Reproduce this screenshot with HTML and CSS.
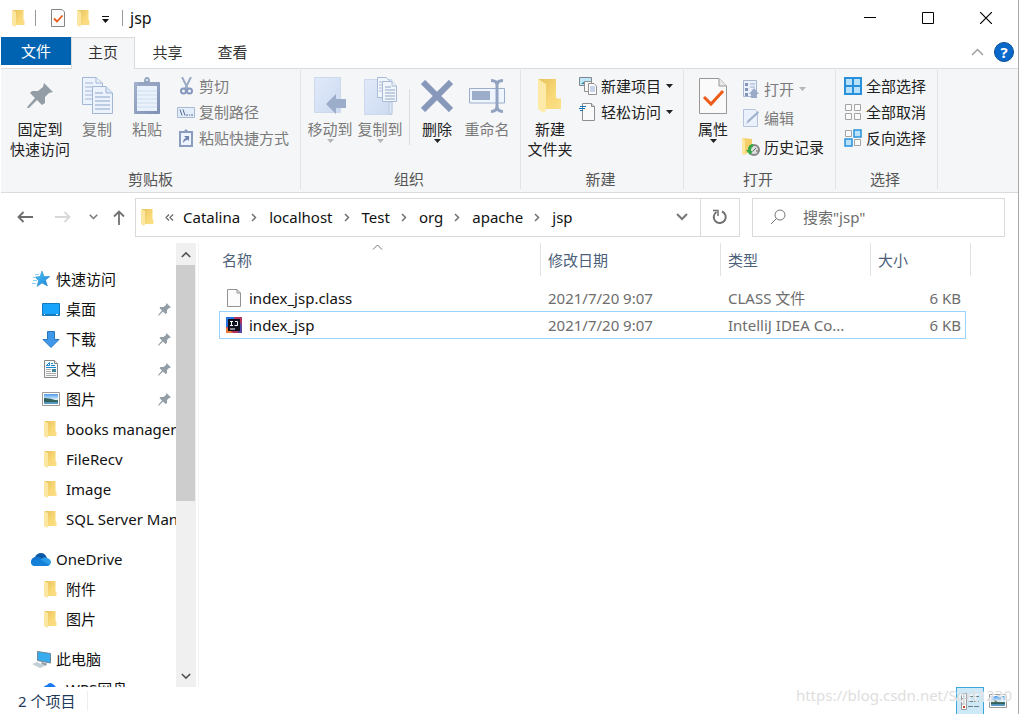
FILE: index.html
```html
<!DOCTYPE html>
<html lang="zh-CN">
<head>
<meta charset="utf-8">
<title>jsp</title>
<link rel="stylesheet" href="styles.css">
</head>
<body>
<svg class="sprite" aria-hidden="true">
  <defs>
    <linearGradient id="gold" x1="0" y1="0" x2="1" y2="1"><stop offset="0" stop-color="#e8c25c"/><stop offset=".6" stop-color="#f9d978"/><stop offset="1" stop-color="#fbe08a"/></linearGradient>
    <linearGradient id="board" x1="0" y1="0" x2="1" y2="1"><stop offset="0" stop-color="#a3b2cd"/><stop offset="1" stop-color="#7e90b3"/></linearGradient>
    <linearGradient id="pale" x1="0" y1="0" x2="1" y2="1"><stop offset="0" stop-color="#e1eafa"/><stop offset="1" stop-color="#cbdaf0"/></linearGradient>
    <linearGradient id="sky" x1="0" y1="0" x2="0" y2="1"><stop offset="0" stop-color="#4f9be8"/><stop offset=".55" stop-color="#d9f0fb"/><stop offset=".6" stop-color="#3f7d77"/><stop offset="1" stop-color="#5f9fd8"/></linearGradient>
    <linearGradient id="star" x1="0" y1="0" x2="1" y2="1"><stop offset="0" stop-color="#54c3f7"/><stop offset="1" stop-color="#1383d8"/></linearGradient>
  </defs>
  <symbol id="folder" viewBox="0 0 24 34"><path d="M1 0H18V19L23 20V30H5Z" fill="url(#gold)"/><path d="M0 0L8 5V31L6 34L0 30Z" fill="#fdeaa9"/></symbol>
  <symbol id="folder-small" viewBox="0 0 13 17"><path d="M1 0H11.500V10L12.500 11V15H3Z" fill="url(#gold)"/><path d="M0 0L4 2V15.500L3 17L0 15Z" fill="#fbe6a2"/></symbol>
  <symbol id="pin" viewBox="0 0 26 26"><path d="M17 0L26 9L22 10L18 14L18 20L15 22L10 17L2 25L0 25L1 23L8 15L3 10L5 8L11 8L16 4Z" fill="#929da5"/></symbol>
  <symbol id="check" viewBox="0 0 28 36"><path d="M.5 .5H20L27.500 8V35.500H.5Z" fill="#fafafa" stroke="#989898"/><path d="M20 .5V8H27.500" fill="#e7e7e7" stroke="#989898"/><path d="M5 19L12 26L24 13" fill="none" stroke="#ee5a18" stroke-width="3"/></symbol>
  <symbol id="check-small" viewBox="0 0 14 18"><path d="M.5 .5H11L13.500 3V17.500H.5Z" fill="#fafafa" stroke="#858585"/><path d="M3 9.500L6 12.500L11.500 6.500" fill="none" stroke="#ee5a18" stroke-width="1.800"/></symbol>
  <symbol id="caret" viewBox="0 0 7 4"><path d="M0 0H7L3.500 4Z" fill="currentColor"/></symbol>
  <symbol id="next" viewBox="0 0 6 9"><path d="M1 1L4.500 4.500L1 8" fill="none" stroke="#727272" stroke-width="1.500"/></symbol>
  <symbol id="down" viewBox="0 0 12 8"><path d="M1 1L6 6L11 1" fill="none" stroke="currentColor" stroke-width="2"/></symbol>
  <symbol id="picture" viewBox="0 0 18 14"><path d="M.5 .5H17.500V13.500H.5Z" fill="#fff" stroke="#999"/><path d="M2 2H16V12H2Z" fill="url(#sky)"/><path d="M2 6Q8 6 16 9V10H2Z" fill="#33615c"/></symbol>
  <symbol id="cloud" viewBox="0 0 20 13"><path d="M4 4Q6 0 10 0Q14 0 16 5L10 8Z" fill="#0c59a8"/><path d="M5 12L0 9Q0 5 4 4Q7 3 10 5L17 9Z" fill="#1273d0"/><path d="M9 7Q13 3 16 5Q20 6 20 9.500Q19 13 16 13H4Q1 13 0 10Z" fill="#2a9ce8"/><path d="M0 8L9 6L18 12Q17 13 16 13H4Q1 13 0 10Z" fill="#1581d8"/></symbol>
</svg>

<div class="window">
  <header class="titlebar">
    <svg class="folder-sm"><use href="#folder-small"/></svg>
    <span class="rule rule-a"></span>
    <button class="plain" aria-label="属性"><svg class="check-sm"><use href="#check-small"/></svg></button>
    <button class="plain quick-folder" aria-label="新建文件夹"><svg class="folder-sm"><use href="#folder-small"/></svg></button>
    <button class="plain quick-menu" aria-label="自定义快速访问工具栏"><svg width="7" height="7" viewBox="0 0 7 7"><path d="M0 0H7V1H0ZM0 3H7L3.500 7Z" fill="#111"/></svg></button>
    <span class="rule"></span>
    <h1 class="title">jsp</h1>
    <div class="controls">
      <button class="plain control" aria-label="最小化"><svg width="12" height="12"><path d="M0 5.500H12" stroke="#000"/></svg></button>
      <button class="plain control" aria-label="最大化"><svg width="12" height="12"><path d="M.5 .5H11.500V11.500H.5Z" fill="none" stroke="#000"/></svg></button>
      <button class="plain control" aria-label="关闭"><svg width="12" height="12"><path d="M0 0L12 12M12 0L0 12" stroke="#000" stroke-width="1.200"/></svg></button>
    </div>
  </header>

  <nav class="tabs">
    <button class="tab file">文件</button>
    <button class="tab active">主页</button>
    <button class="tab">共享</button>
    <button class="tab">查看</button>
    <div class="tab-tools">
      <button class="plain" aria-label="最小化功能区"><svg width="13" height="8"><path d="M1 7L6.500 1.500L12 7" fill="none" stroke="#a0a0a0" stroke-width="1.500"/></svg></button>
      <button class="help" aria-label="帮助">?</button>
    </div>
  </nav>

  <section class="ribbon">
    <div class="group clipboard">
      <div class="tools">
        <button class="big pin-btn"><span class="art"><svg width="26" height="26"><use href="#pin"/></svg></span>固定到<br>快速访问</button>
        <button class="big off"><span class="art"><svg width="31" height="37" viewBox="0 0 31 37"><g fill="#edf3fc" stroke="#a3b6d5"><path d="M.5 .5H14L20.500 6V27.500H.5Z"/><path d="M14 .5V6H20"/><path d="M3 6H11M3 10H17M3 14H17M3 18H17M3 22H17"/><path d="M10.500 9.500H24L30.500 16V36.500H10.500Z"/><path d="M24 9.500V16H30" fill="#d8e5f8"/><path d="M13 16H21M13 20H28M13 24H28M13 28H28M13 32H28" stroke="#8da5ca"/></g></svg></span>复制</button>
        <button class="big off"><span class="art"><svg width="26" height="37" viewBox="0 0 26 37"><rect y="5" width="26" height="32" rx="1" fill="url(#board)"/><path d="M3 9H23V34H3Z" fill="#e9f1fd"/><path d="M3 14H23M3 18H23M3 22H23M3 26H23M3 30H23" stroke="#d0deef"/><path d="M5 8V5H10Q10 0 13 0Q16 0 16 5H21V8Z" fill="#96a5bf"/><circle cx="13" cy="3" r="1" fill="#edf4ff"/></svg></span>粘贴</button>
        <div class="stack">
          <button class="small off"><span class="icon"><svg width="13" height="18" viewBox="0 0 13 18"><path d="M2 0L8 12M11 0L5 12" stroke="#9aabc5" stroke-width="2"/><circle cx="3.500" cy="14" r="2.500" fill="none" stroke="#8598bd" stroke-width="2"/><circle cx="9.500" cy="14" r="2.500" fill="none" stroke="#8598bd" stroke-width="2"/></svg></span>剪切</button>
          <button class="small off"><span class="icon"><svg width="18" height="11"><path d="M.5 .5H17.500V10.500H.5Z" fill="#e4edfa" stroke="#a9b9d2"/><path d="M3 2.500L5 8.500M6 2.500L8 8.500" stroke="#536b92"/><path d="M9 8H11M12 8H13M14 8H16" stroke="#536b92"/></svg></span>复制路径</button>
          <button class="small off"><span class="icon"><svg width="14" height="18" viewBox="0 0 14 18"><path d="M0 2H14V18H0Z" fill="#8b9dbe"/><path d="M2 4H12V16H2Z" fill="#edf4ff"/><path d="M3 4V2H5L7 0L9 2H11V4Z" fill="#8b9dbe"/><path d="M4 14Q4 10 7 9L5 7H10V12L8.500 10.500Q6 11 4 14Z" fill="#6e83ab"/></svg></span>粘贴快捷方式</button>
        </div>
      </div>
      <h2 class="group-name">剪贴板</h2>
    </div>

    <div class="group organize">
      <div class="tools">
        <button class="big off"><span class="art"><svg width="32" height="37" viewBox="0 0 32 37"><path d="M.5 .5H26.500V35.500H.5Z" fill="url(#pale)" stroke="#ccd9ea"/><path d="M12 27L22 17V22H32V31H22V37Z" fill="#9cadc9"/></svg></span>移动到<svg class="caret"><use href="#caret"/></svg></button>
        <button class="big off"><span class="art"><svg width="33" height="38" viewBox="0 0 33 38"><path d="M.5 2.500H28V37.500H.5Z" fill="url(#pale)" stroke="#ccd9ea"/><path d="M25 25H28V37H25Z" fill="#dce7f5" stroke="#b9c9df"/><g fill="#f1f6fd" stroke="#a8bad4"><path d="M13.500 .5H22L27 5V20.500H13.500Z"/><path d="M15 5H21M15 8H25M15 11H25M15 14H25"/><path d="M18.500 4.500H28L32.500 9V24.500H18.500Z"/><path d="M28 4.500V9H32"/><path d="M21 10H27M21 13H31M21 16H31M21 19H31M21 22H31" stroke="#91a6c7"/></g></svg></span>复制到<svg class="caret"><use href="#caret"/></svg></button>
        <span class="divider"></span>
        <button class="big"><span class="art"><svg width="32" height="32" viewBox="0 0 32 32"><path d="M2 2L30 30M30 2L2 30" stroke="#8798ba" stroke-width="6"/></svg></span>删除<svg class="caret"><use href="#caret"/></svg></button>
        <button class="big off"><span class="art"><svg width="36" height="34" viewBox="0 0 36 34"><path d="M.5 9.500H35.500V24H.5Z" fill="#eef5ff" stroke="#9caec9"/><path d="M3 12H21V21H3Z" fill="#9cadca"/><path d="M22 1.500Q28 1.500 28 6Q28 1.500 34 1.500M28 5V28M22 32.500Q28 32.500 28 27Q28 32.500 34 32.500" fill="none" stroke="#91a3c1" stroke-width="3"/></svg></span>重命名</button>
      </div>
      <h2 class="group-name">组织</h2>
    </div>

    <div class="group create">
      <div class="tools">
        <button class="big"><span class="art"><svg width="24" height="34"><use href="#folder"/></svg></span>新建<br>文件夹</button>
        <div class="stack">
          <button class="small"><span class="icon"><svg width="18" height="18" viewBox="0 0 18 18"><path d="M.5 .5H12.500V8.500H.5Z" fill="#bfe7fa" stroke="#80868b"/><path d="M2 7L6 4L10 7Z" fill="#338595"/><path d="M5.500 4.500H12.500V14.500H5.500Z" fill="#f8f8f8" stroke="#929292"/><path d="M9.500 6.500H15L17.500 9V17.500H9.500Z" fill="#fff" stroke="#929292"/><path d="M11 10H16M11 12H16M11 14H16" stroke="#91a8dc"/></svg></span>新建项目<svg class="caret"><use href="#caret"/></svg></button>
          <button class="small"><span class="icon"><svg width="18" height="18" viewBox="0 0 18 18"><path d="M3.500 .5H12.500L15.500 3.500V17.500H3.500Z" fill="#fafafa" stroke="#8e8e8e"/><path d="M12.500 .5V3.500H15.500" fill="#ddd" stroke="#8e8e8e"/><path d="M1 3.500H7M0 5.500H6M1 7.500H4" stroke="#1674bc"/></svg></span>轻松访问<svg class="caret"><use href="#caret"/></svg></button>
        </div>
      </div>
      <h2 class="group-name">新建</h2>
    </div>

    <div class="group open">
      <div class="tools">
        <button class="big"><span class="art"><svg width="28" height="36"><use href="#check"/></svg></span>属性<svg class="caret"><use href="#caret"/></svg></button>
        <div class="stack loose">
          <button class="small off"><span class="icon"><svg width="16" height="18" viewBox="0 0 16 18"><path d="M.5 .5H13.500V16.500H.5Z" fill="#eaf1fc" stroke="#a7b6cd"/><path d="M2 3H5V6H2ZM2 8H5V11H2ZM2 13H5V16H2Z" fill="#8295b8"/><path d="M7 4H12M7 7H12" stroke="#9caec8"/><path d="M8 18V14H6L11 8L16 14H14V18Z" fill="#9aabc8"/></svg></span>打开<svg class="caret"><use href="#caret"/></svg></button>
          <button class="small off"><span class="icon"><svg width="16" height="18" viewBox="0 0 16 18"><path d="M.5 .5H12L14.500 3V17.500H.5Z" fill="#eaf1fc" stroke="#b5c4da"/><path d="M3 15L5 11L15 2L16 4L6 13Z" fill="#a0b0ca"/></svg></span>编辑</button>
          <button class="small"><span class="icon"><svg width="18" height="18" viewBox="0 0 18 18"><path d="M0 0L10 1V12L2 17L0 15Z" fill="#f4cf69"/><path d="M0 0L3 2V17L0 15Z" fill="#fde89d"/><circle cx="12" cy="12" r="5" fill="#ddd" stroke="#888" stroke-width="2"/><path d="M11 13L14 10M14 13H16" fill="none" stroke="#666"/><path d="M11 6Q6 6 6 12H4L8 17L11 13H9Q9 9 11 9Z" fill="#35a846"/></svg></span>历史记录</button>
        </div>
      </div>
      <h2 class="group-name">打开</h2>
    </div>

    <div class="group choose">
      <div class="tools">
        <div class="stack">
          <button class="small"><span class="icon"><svg width="18" height="18" viewBox="0 0 18 18"><path d="M1 1H17V17H1ZM9 1V17M1 9H17" fill="#b8e1fb" stroke="#2991dc" stroke-width="2"/></svg></span>全部选择</button>
          <button class="small"><span class="icon"><svg width="16" height="16" viewBox="0 0 16 16"><path d="M.5 .5H6.500V6.500H.5ZM9.500 .5H15.500V6.500H9.500ZM.5 9.500H6.500V15.500H.5ZM9.500 9.500H15.500V15.500H9.500Z" fill="#fafafa" stroke="#a4a4a4"/></svg></span>全部取消</button>
          <button class="small"><span class="icon"><svg width="18" height="18" viewBox="0 0 18 18"><path d="M1.500 1.500H7.500V7.500H1.500ZM10.500 10.500H16.500V16.500H10.500Z" fill="#fafafa" stroke="#a4a4a4"/><path d="M10 1H17V8H10ZM1 10H8V17H1Z" fill="#b8e1fb" stroke="#2991dc" stroke-width="1.500"/></svg></span>反向选择</button>
        </div>
      </div>
      <h2 class="group-name">选择</h2>
    </div>
  </section>

  <div class="location">
    <div class="history">
      <button class="plain" aria-label="返回"><svg width="16" height="12"><path d="M1 6H16M6.500 1L1.500 6L6.500 11" fill="none" stroke="#6d6d6d" stroke-width="1.800"/></svg></button>
      <button class="plain forward" aria-label="前进"><svg width="16" height="12"><path d="M0 6H15M9.500 1L14.500 6L9.500 11" fill="none" stroke="#d8d8d8" stroke-width="1.800"/></svg></button>
      <button class="plain recent" aria-label="最近浏览的位置"><svg width="9" height="6"><use href="#down"/></svg></button>
      <button class="plain up" aria-label="上移"><svg width="12" height="15"><path d="M6 15V1.500M1 6.500L6 1.500L11 6.500" fill="none" stroke="#727272" stroke-width="1.800"/></svg></button>
    </div>
    <div class="address">
      <svg class="folder-sm"><use href="#folder-small"/></svg>
      <svg class="earlier" width="9" height="7"><path d="M4 .5L1 3.500L4 6.500M8 .5L5 3.500L8 6.500" fill="none" stroke="#666" stroke-width="1.200"/></svg>
      <div class="crumbs">
        <a href="#catalina">Catalina</a><svg class="next"><use href="#next"/></svg>
        <a href="#localhost">localhost</a><svg class="next"><use href="#next"/></svg>
        <a href="#test">Test</a><svg class="next"><use href="#next"/></svg>
        <a href="#org">org</a><svg class="next"><use href="#next"/></svg>
        <a href="#apache">apache</a><svg class="next"><use href="#next"/></svg>
        <a href="#jsp">jsp</a>
      </div>
      <button class="plain expand" aria-label="以前的位置"><svg width="12" height="8"><use href="#down"/></svg></button>
      <button class="plain refresh" aria-label="刷新"><svg width="16" height="16" viewBox="0 0 16 16"><path d="M4.500 3A6 6 0 1 0 10 2.500" fill="none" stroke="#707070" stroke-width="2"/><path d="M1 1.500H6V7" fill="none" stroke="#707070" stroke-width="1.500"/></svg></button>
    </div>
    <label class="search">
      <svg width="16" height="16"><circle cx="10" cy="6" r="5" fill="none" stroke="#777"/><path d="M6.500 9.500L1 15" stroke="#777"/></svg>
      <input type="search" aria-label="搜索" placeholder='搜索"jsp"'>
    </label>
  </div>

  <main class="body">
    <aside class="sidebar">
      <nav class="tree">
        <div class="branch">
          <a class="node root" href="#quick"><svg width="18" height="16" viewBox="0 0 18 16"><path d="M10 0L12 5.500L18 5.500L13.500 9L15.500 15L10 12L5 15.500L6.500 9.500L3 6L8 5.500Z" fill="url(#star)" stroke="#2484c6" stroke-width=".5"/><path d="M3 3.500H7M1 6.500H4M1 9.500H5M0 12.500H4" stroke="#8fd0f2"/></svg>快速访问</a>
          <a class="node" href="#desktop"><svg width="18" height="13" viewBox="0 0 18 13"><path d="M.5 .5H17.500V12.500H.5Z" fill="#18a3fc" stroke="#137bbd"/><path d="M1 11.500H17" stroke="#1679b8"/><path d="M2 11.500H3M14 11.500H16" stroke="#fff"/></svg>桌面<svg class="pin"><use href="#pin"/></svg></a>
          <a class="node" href="#downloads"><svg width="18" height="17" viewBox="0 0 18 17"><path d="M5.500 .5H12.500V8.500H17L9 16.500L1 8.500H5.500Z" fill="#3f98ea" stroke="#2875bb"/></svg>下载<svg class="pin"><use href="#pin"/></svg></a>
          <a class="node" href="#documents"><svg width="18" height="18" viewBox="0 0 18 18"><path d="M2.500 .5H12.500L15.500 3.500V17.500H2.500Z" fill="#fafafa" stroke="#888"/><path d="M12.500 .5V3.500H15.500" fill="#eee" stroke="#888"/><path d="M4 5.500H7.500V2.500L5 5M9 3.500H11M9 5.500H13M4 7.500H14" fill="none" stroke="#1b88cd"/><path d="M4 9.500H9M4 11.500H9M4 13.500H14M4 15.500H14" stroke="#aaa"/><path d="M10 9H14V12H10Z" fill="#41859a"/></svg>文档<svg class="pin"><use href="#pin"/></svg></a>
          <a class="node" href="#pictures"><svg width="18" height="14"><use href="#picture"/></svg>图片<svg class="pin"><use href="#pin"/></svg></a>
          <a class="node" href="#books"><svg class="folder-tree"><use href="#folder-small"/></svg>books manager</a>
          <a class="node" href="#filerecv"><svg class="folder-tree"><use href="#folder-small"/></svg>FileRecv</a>
          <a class="node" href="#image"><svg class="folder-tree"><use href="#folder-small"/></svg>Image</a>
          <a class="node" href="#sql"><svg class="folder-tree"><use href="#folder-small"/></svg>SQL Server Man</a>
        </div>
        <div class="branch">
          <a class="node root cloud" href="#onedrive"><svg width="20" height="13"><use href="#cloud"/></svg>OneDrive</a>
          <a class="node" href="#attachments"><svg class="folder-tree"><use href="#folder-small"/></svg>附件</a>
          <a class="node" href="#cloud-pictures"><svg class="folder-tree"><use href="#folder-small"/></svg>图片</a>
        </div>
        <div class="branch">
          <a class="node root cloud" href="#computer"><svg width="20" height="17" viewBox="0 0 20 17"><path d="M6.500 .5L19.500 2.500V12L6.500 9.500Z" fill="#38acef" stroke="#6d8899"/><path d="M11 11L16 12.500L15 15L10 13Z" fill="#95a2ab"/><path d="M1 13L6 11L14 15L9 17Z" fill="#c4ced5"/></svg>此电脑</a>
          <a class="node" href="#wps"><svg width="18" height="16" viewBox="0 0 18 16"><path d="M3 15Q0 14 1 9Q1 5 5 4Q8 0 12 4Q14 5 14 8Q18 9 17 13Q16 15 14 15Z" fill="#1a78f0"/></svg>WPS网盘</a>
        </div>
      </nav>
      <div class="scrollbar">
        <button class="plain scroll-arrow" aria-label="向上滚动"><svg class="flip" width="10" height="7"><use href="#down"/></svg></button>
        <div class="track"><div class="thumb"></div></div>
        <button class="plain scroll-arrow" aria-label="向下滚动"><svg width="10" height="7"><use href="#down"/></svg></button>
      </div>
    </aside>

    <section class="files">
      <table class="list">
        <colgroup><col><col class="col-date"><col class="col-type"><col class="col-size"></colgroup>
        <thead>
          <tr><th class="name-head">名称<svg class="sort" width="11" height="6"><path d="M1 5.500L5.500 1L10 5.500" fill="none" stroke="#777"/></svg></th><th>修改日期</th><th>类型</th><th class="last">大小</th></tr>
        </thead>
        <tbody>
          <tr><td><span class="file-name"><svg width="16" height="18" viewBox="0 0 16 18"><path d="M1.500 .5H11L14.500 4V17.500H1.500Z" fill="#fcfcfc" stroke="#929292"/><path d="M11 .5V4H14.500" fill="none" stroke="#929292"/></svg>index_jsp.class</span></td><td>2021/7/20 9:07</td><td>CLASS 文件</td><td class="size">6 KB</td></tr>
          <tr class="selected"><td><span class="file-name"><svg width="16" height="16" viewBox="0 0 16 16"><path d="M0 0H16V16H0Z" fill="#b33360"/><path d="M0 0H8V3H3V10H0Z" fill="#2675df"/><path d="M0 10V16H7Z" fill="#ed7b37"/><path d="M13 4L16 8V16H12Z" fill="#5446a3"/><path d="M2 2H14V14H2Z" fill="#111020"/><path d="M4 4.500H7M5.500 4V8M4 8.500H7M9 4.500H11.500V8.500H8.500M4 12H9" fill="none" stroke="#fff"/></svg>index_jsp</span></td><td>2021/7/20 9:07</td><td>IntelliJ IDEA Co...</td><td class="size">6 KB</td></tr>
        </tbody>
      </table>
    </section>
  </main>

  <footer class="status">
    <span class="count">2 个项目</span>
    <div class="views">
      <button class="plain view on" aria-label="详细信息"><svg width="18" height="17" viewBox="0 0 18 17"><path d="M.5 .5H5.500V16.500H.5ZM.5 5.500H5.500M.5 11H5.500" fill="#fff" stroke="#999"/><path d="M2 3H4" stroke="#277dcc" stroke-width="2"/><path d="M2 8.500H4" stroke="#6f8752" stroke-width="2"/><path d="M2 14H4" stroke="#c6412c" stroke-width="2"/><path d="M7 3.500H12M13 3.500H18M7 8.500H12M13 8.500H18M7 13.500H12M13 13.500H18" stroke="#6e7b81"/></svg></button>
      <button class="plain view" aria-label="大缩略图"><svg width="18" height="14"><use href="#picture"/></svg></button>
    </div>
    <span class="watermark">https://blog.csdn.net/Sqrt1230</span>
  </footer>
</div>
</body>
</html>
```

FILE: styles.css
```css
* { box-sizing: border-box; }
body {
  margin: 0;
  background: #fff;
  color: #111;
  font: 15px/20px "Noto Sans", "Noto Sans CJK SC", sans-serif;
}
button, input { font: inherit; color: inherit; }
a { color: inherit; text-decoration: none; }
svg { display: block; flex: none; }
.sprite { position: absolute; width: 0; height: 0; }
.plain {
  display: flex;
  align-items: center;
  justify-content: center;
  padding: 0;
  border: 0;
  background: none;
}
.window {
  display: flex;
  flex-direction: column;
  height: 100vh;
  padding-left: 1px;
  border-right: 1px solid #aaa;
  overflow: hidden;
}

/* Title bar */
.titlebar {
  display: flex;
  align-items: center;
  height: 37px;
  flex: none;
  padding: 0 3px 1px 11px;
}
.folder-sm { width: 13px; height: 17px; }
.check-sm { width: 14px; height: 18px; }
.rule { width: 1px; height: 16px; background: #999; }
.rule-a { margin: 0 15px 0 10px; }
.quick-folder { margin: 0 12px; }
.quick-menu { margin-right: 13px; padding-top: 3px; }
.title { margin: 0 0 0 7px; font-size: 16px; font-weight: 400; }
.controls { display: flex; margin-left: auto; }
.control { width: 58px; height: 36px; }

/* Tabs */
.tabs {
  display: flex;
  height: 32px;
  flex: none;
  border-bottom: 1px solid #dadbdc;
}
.tab {
  width: 65px;
  height: 31px;
  padding: 0 0 2px;
  border: 0;
  background: none;
  color: #333;
}
.tab.file { width: 70px; height: 28px; padding: 0; background: #0063b1; color: #fff; }
.tab.active {
  width: 64px;
  height: 32px;
  padding-bottom: 4px;
  border: 1px solid #dadbdc;
  border-bottom: 0;
  background: #f5f6f7;
}
.tab-tools { display: flex; align-items: center; gap: 10px; margin-left: auto; padding: 0 4px 2px 0; }
.help {
  width: 20px;
  height: 20px;
  padding: 0;
  border: 1px solid #0b4f96;
  border-radius: 50%;
  background: #0869cb;
  color: #fff;
  font-weight: 700;
  line-height: 18px;
}

/* Ribbon */
.ribbon {
  display: flex;
  height: 124px;
  flex: none;
  padding: 1px 0 3px;
  border-bottom: 1px solid #dadbdc;
  background: #f5f6f7;
}
.group {
  display: flex;
  flex-direction: column;
  border-right: 1px solid #e2e3e4;
}
.clipboard { width: 300px; }
.clipboard .tools { padding-left: 7px; }
.organize { width: 220px; }
.organize .tools { padding-left: 4px; }
.create { width: 163px; }
.create .tools { padding-left: 4px; }
.open { width: 152px; }
.open .tools { padding-left: 4px; }
.choose { width: 102px; }
.choose .tools { padding-left: 8px; }
.tools { display: flex; align-items: flex-start; flex: 1; padding-top: 3px; }
.group-name {
  margin: 0;
  padding-right: 3px;
  color: #555;
  font-size: 15px;
  font-weight: 400;
  text-align: center;
}
.clipboard .group-name { padding-right: 0; }
.big {
  display: flex;
  flex-direction: column;
  align-items: center;
  width: 50px;
  padding: 0;
  border: 0;
  background: none;
  color: #222;
  white-space: nowrap;
}
.pin-btn { width: 64px; }
.big:has(br) { display: block; }
.art { display: flex; align-items: center; justify-content: center; height: 45px; margin-bottom: 1px; }
.off { color: #7b7b7b; }
.caret { width: 7px; height: 4px; }
.off .caret { color: #b5b5b5; }
.divider { width: 1px; height: 56px; margin: 16px 2px 0 4px; background: #dddedf; }
.stack { display: flex; flex-direction: column; padding-left: 4px; }
.small {
  display: flex;
  align-items: center;
  height: 26px;
  padding: 0;
  border: 0;
  background: none;
  color: #222;
  white-space: nowrap;
}
.small.off { color: #7b7b7b; }
.loose { padding-top: 1px; }
.loose .small { height: 29px; }
.icon { display: flex; justify-content: center; width: 18px; margin-right: 4px; }
.clipboard .stack { padding-left: 5px; }
.small .caret { margin-left: 5px; }
.choose .stack { padding-left: 0; }

/* Location bar */
.location {
  display: flex;
  align-items: center;
  height: 50px;
  flex: none;
  padding: 0 13px 2px 0;
}
.history { display: flex; align-items: center; width: 134px; padding-left: 16px; color: #777; }
.forward { margin-left: 22px; }
.recent { margin-left: 18px; }
.up { margin-left: 15px; }
.address {
  display: flex;
  align-items: center;
  flex: 1;
  height: 39px;
  padding-left: 5px;
  border: 1px solid #d9d9d9;
}
.earlier { margin: 0 9px 0 11px; }
.crumbs { display: flex; align-items: center; gap: 12px; flex: 1; }
.next { width: 6px; height: 9px; }
.crumbs a { margin-right: -1px; }
.expand { width: 36px; height: 37px; color: #777; }
.refresh { width: 39px; height: 37px; border-left: 1px solid #d9d9d9; }
.search {
  display: flex;
  align-items: center;
  gap: 17px;
  width: 253px;
  height: 39px;
  margin-left: 12px;
  padding: 0 17px;
  border: 1px solid #d9d9d9;
}
.search input { flex: 1; min-width: 0; padding: 0; border: 0; outline: 0; background: none; }
.search input::placeholder { color: #6d6d6d; opacity: 1; }

/* Navigation pane */
.body { display: flex; flex: 1; min-height: 0; }
.sidebar { display: flex; width: 198px; flex: none; padding-right: 2px; border-right: 1px solid #f3f3f3; }
.tree { flex: 1; min-width: 0; padding-top: 21px; overflow: hidden; }
.branch { margin-bottom: 10px; }
.node {
  display: flex;
  align-items: center;
  gap: 6px;
  height: 30px;
  padding-left: 41px;
  white-space: nowrap;
}
.root { padding-left: 31px; }
.root.cloud { padding-left: 30px; gap: 5px; }
.folder-tree { width: 13px; height: 17px; margin: 0 3px 0 2px; }
.pin { width: 13px; height: 13px; margin: 0 5px 0 auto; }
.scrollbar { display: flex; flex-direction: column; width: 20px; background: #f0f0f0; color: #555; }
.scroll-arrow { height: 22px; flex: none; }
.flip { transform: rotate(180deg); }
.track { flex: 1; }
.thumb { width: 19px; height: 59%; background: #cdcdcd; }

/* File list */
.files { flex: 1; min-width: 0; padding-left: 20px; }
.list { width: 747px; border-collapse: separate; border-spacing: 0; table-layout: fixed; }
.col-date { width: 180px; }
.col-type { width: 150px; }
.col-size { width: 95px; }
.list th {
  position: relative;
  height: 34px;
  padding: 0 7px;
  color: #4c607a;
  font-weight: 400;
  text-align: left;
}
.list .name-head { padding-left: 3px; }
.list th::after {
  position: absolute;
  top: 0;
  right: 0;
  width: 1px;
  height: 33px;
  background: #e3e3e3;
  content: "";
}
.list th.last::after { right: -5px; }
.sort { position: absolute; top: 1px; left: 153px; }
.list tbody::before { display: block; height: 7px; content: ""; }
.list td { height: 27px; padding: 0 7px; border: 0 solid #99d1ff; color: #6d6d6d; }
.list td:first-child { color: #111; }
.list .size { padding: 0 5px; text-align: right; }
.list .selected td { height: 28px; border-width: 1px 0; }
.list .selected td:first-child { border-left-width: 1px; padding-left: 6px; }
.list .selected td:last-child { border-right-width: 1px; padding-right: 4px; }
.file-name { display: flex; align-items: center; gap: 7px; }

/* Status bar */
.status {
  position: relative;
  display: flex;
  align-items: center;
  justify-content: space-between;
  height: 27px;
  flex: none;
  padding: 0 6px 0 17px;
  color: #1e395b;
}
.count { padding-right: 12px; border-right: 1px solid #eee; }
.views { display: flex; }
.view { width: 28px; height: 27px; }
.view.on { border: 1px solid #3aa7dc; border-bottom: 0; background: #cde8f6; }
.watermark {
  position: absolute;
  top: -2px;
  right: 6px;
  color: #dedede;
  font-size: 15px;
  text-shadow: 1px 1px 1px #fff;
}
```
